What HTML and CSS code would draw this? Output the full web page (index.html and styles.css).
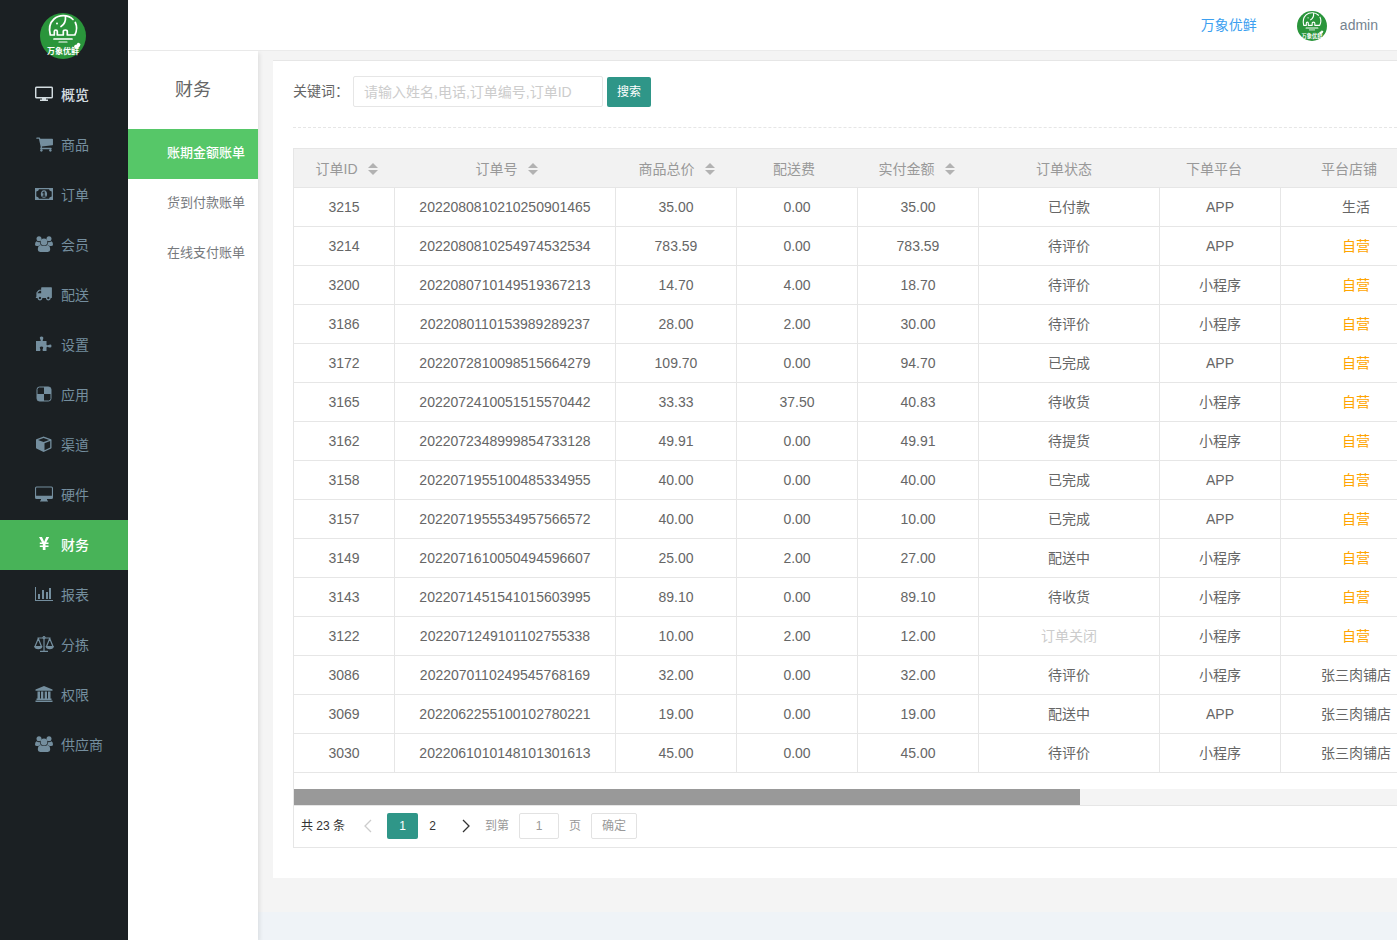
FILE: index.html
```html
<!DOCTYPE html>
<html lang="zh-CN">
  <head>
    <meta charset="UTF-8" />
    <meta name="viewport" content="width=device-width, initial-scale=1.0" />
    <title>账期金额账单</title>
    <link rel="stylesheet" href="styles.css">
  </head>
  <body>
    <!-- 公用图形 -->
    <svg class="defs" aria-hidden="true">
      <symbol id="logo" viewBox="0 0 46 46">
        <circle cx="23" cy="23" r="23" fill="#2a953b" />
        <g fill="none" stroke="#fff" stroke-width="1.700" stroke-linecap="round" stroke-linejoin="round">
          <path d="M33 6.500C28 1.500 19 1.500 14 6 9 10.500 9 17 10.300 22h4v-3.500q0-1.500 1.500-1.500t1.500 1.500V22h6v-3.500q0-1.500 2-1.500t2 1.500V22h7.500c2-4 2.500-8.500.5-12.500" />
          <path d="M25.500 3.500q.5 7-4.500 10" />
          <path d="M14 26h18" />
          <path d="M19 29h8" stroke-width="1.200" />
        </g>
        <circle cx="17" cy="10.500" r="1" fill="#fff" />
        <path d="M34 34q0-3 3-2.500 0-3 3.500-.5-.5 4-4.500 4.500z" fill="#fff" />
      </symbol>
      <symbol id="users" viewBox="0 0 18 16">
        <circle cx="4" cy="2.700" r="2.500" />
        <circle cx="14" cy="2.700" r="2.500" />
        <path d="M1.500 5.200Q4 7 5 6q0 1.500.8 2.800Q4 9 3.500 10H2Q0 10 0 8.400 0 6 1.500 5.200zM16.500 5.200Q14 7 13 6q0 1.500-.8 2.800Q14 9 14.500 10H16q2 0 2-1.600 0-2.400-1.500-3.200z" />
        <circle cx="9" cy="6" r="3.400" />
        <path d="M5.400 9Q9 11 12.600 9q2.600.8 2.600 4.600 0 2.400-2.400 2.400H5.200q-2.400 0-2.400-2.400Q2.800 9.800 5.400 9z" />
      </symbol>
    </svg>

    <div class="layout">
      <!-- 主导航 -->
      <nav class="side">
        <svg class="side-logo" viewBox="0 0 46 46">
          <use href="#logo" />
          <text x="7" y="41">万象优鲜</text>
        </svg>
        <a class="side-item light" href="#">
          <svg viewBox="0 0 18 16"><path fill="none" stroke="currentColor" stroke-width="1.500" d="M1.700 1.300h14.600q1 0 1 1v8.400q0 1-1 1H1.700q-1 0-1-1V2.300q0-1 1-1z" /><path d="M7 12h4v1.500h2V15H5v-1.500h2z" /></svg>
          <span>概览</span>
        </a>
        <a class="side-item" href="#">
          <svg viewBox="-60 100 1792 1593"><path d="M704 1536q0 52-38 90t-90 38-90-38-38-90 38-90 90-38 90 38 38 90zm896 0q0 52-38 90t-90 38-90-38-38-90 38-90 90-38 90 38 38 90zm128-1088v512q0 24-16.500 42.500t-40.500 21.500l-1044 122q13 60 13 70 0 16-24 64h920q26 0 45 19t19 45-19 45-45 19h-1024q-26 0-45-19t-19-45q0-11 8-31.500t16-36 21.500-40 15.500-29.500l-177-823h-204q-26 0-45-19t-19-45 19-45 45-19h256q16 0 28.500 6.500t19.500 15.500 13 24.500 8 26 5.500 29.500 4.500 26h1201q26 0 45 19t19 45z" /></svg>
          <span>商品</span>
        </a>
        <a class="side-item" href="#">
          <svg viewBox="0 0 18 16"><path fill-rule="evenodd" d="M0 2h18v12H0zM4 3.300Q3.800 5.200 1.300 5.600v4.800Q3.800 10.800 4 12.700h10q.2-1.900 2.700-2.300V5.600Q14.200 5.200 14 3.300z" /><path fill-rule="evenodd" d="M9 4.200c4.200 0 4.200 7.600 0 7.600s-4.200-7.600 0-7.600zM8.600 5.500L7.200 6.700l.5.700.7-.4v2.700h-1v1h3.200v-1h-.9V5.500z" /></svg>
          <span>订单</span>
        </a>
        <a class="side-item" href="#">
          <svg><use href="#users" /></svg>
          <span>会员</span>
        </a>
        <a class="side-item" href="#">
          <svg viewBox="-20 120 1930 1716"><path d="M640 1408q0-52-38-90t-90-38-90 38-38 90 38 90 90 38 90-38 38-90zm-384-512h384v-256h-158q-13 0-22 9l-195 195q-9 9-9 22v30zm1280 512q0-52-38-90t-90-38-90 38-38 90 38 90 90 38 90-38 38-90zm256-1088v1024q0 15-4 26.500t-13.500 18.500-16.500 11.500-23.500 6-22.500 2-25.500 0-22.500-.5q0 106-75 181t-181 75-181-75-75-181h-384q0 106-75 181t-181 75-181-75-75-181h-64q-3 0-22.500.5t-25.500 0-22.500-2-23.500-6-16.500-11.500-13.500-18.500-4-26.500q0-26 19-45t45-19v-320q0-8-.5-35t0-38 2.500-34.500 6.500-37 14-30.500 22.500-30l198-198q19-19 50.500-32t58.500-13h160v-192q0-26 19-45t45-19h1024q26 0 45 19t19 45z" /></svg>
          <span>配送</span>
        </a>
        <a class="side-item" href="#">
          <svg viewBox="0 0 18 16"><path d="M1 5h4.600Q6 4 5.200 3.200 4 .5 6.500.5t1.600 2.700Q7.200 4.200 8 5h3.500v3.800q.8.900 2 .2 3-1.300 3 1t-3 1.200q-1.200-.8-2 .2V15H8q-1-.8-.2-2 1.200-2.400-1.300-2.400T5.200 13q.8 1.200-.2 2H1z" /></svg>
          <span>设置</span>
        </a>
        <a class="side-item" href="#">
          <svg viewBox="0 0 18 16"><rect x="2" y="1" width="14" height="14" rx="2.500" fill="none" stroke="currentColor" /><path d="M9 1h4.500Q16 1 16 3.500V8H9zM2 8h7v7H4.500Q2 15 2 12.500z" /></svg>
          <span>应用</span>
        </a>
        <a class="side-item" href="#">
          <svg viewBox="0 0 18 16"><path fill-rule="evenodd" d="M8.600.6L1.300 3.200 1 3.700v8.200l.4.600 7.200 3.400 7.500-3.400.4-.6V3.700l-.4-.5zM8.600 2l5.600 2-5.600 2.100L3 4zM9.500 7.300l5.700-2.200v6.500l-5.700 2.600z" /></svg>
          <span>渠道</span>
        </a>
        <a class="side-item" href="#">
          <svg viewBox="0 0 18 16"><path fill-rule="evenodd" d="M1.500.5h15Q18 .5 18 2v9.500q0 1.500-1.500 1.500H12v1.500h1v1H5v-1h1V13H1.500Q0 13 0 11.500V2Q0 .5 1.500.5zM1.500 1.600q-.4 0-.4.4v7.800h15.800V2q0-.4-.4-.4z" /></svg>
          <span>硬件</span>
        </a>
        <a class="side-item active" href="#">
          <svg viewBox="0 0 18 16"><path d="M4 1h3l2.200 4.700L11.200 1h3l-3 5.600h2.300v1.500h-3v1.300h3v1.500h-3V14H7.800v-3.100h-3V9.400h3V8.100h-3V6.600H7z" /></svg>
          <span>财务</span>
        </a>
        <a class="side-item" href="#">
          <svg class="wide" viewBox="0 0 20 16"><path d="M1 1h1v13h17v1H1zM4 8h2v5H4zM8 4h2v9H8zM12 6h2v7h-2zM15 2h2v11h-2z" /></svg>
          <span>报表</span>
        </a>
        <a class="side-item" href="#">
          <svg class="wide" viewBox="0 0 20 16"><g fill="none" stroke="currentColor"><path d="M3.500 2h13M10 1v14M6 15.300h8M4.300 2.500L1 10.500M4.300 2.500l3.200 8M15.700 2.500l-3.200 8M15.700 2.500l3.300 8" stroke-width="1.200" /><circle cx="10" cy="1.600" r="1.200" /></g><path d="M0 10h8.500q-.5 3.200-4.200 3.200T0 10zM11.500 10H20q-.5 3.200-4.200 3.200t-4.300-3.200z" /></svg>
          <span>分拣</span>
        </a>
        <a class="side-item" href="#">
          <svg viewBox="0 0 18 16"><path d="M9 0l8.500 3.500v1.200H.5V3.500zM2.500 5.500H5v7h1v-7h2.300v7h1.400v-7H12v7h1v-7h2.500v7h1V14h-15v-1.500h1zM.5 14.600h17V16H.5z" /></svg>
          <span>权限</span>
        </a>
        <a class="side-item" href="#">
          <svg><use href="#users" /></svg>
          <span>供应商</span>
        </a>
      </nav>

      <div class="wrap">
        <header class="top">
          <a class="shop" href="#">万象优鲜</a>
          <svg class="avatar" viewBox="0 0 46 46">
            <use href="#logo" />
            <text x="7" y="41">万象优鲜</text>
          </svg>
          <a class="user" href="#">admin</a>
        </header>

        <div class="body">
          <!-- 二级菜单 -->
          <nav class="sub">
            <h2>财务</h2>
            <a class="active" href="#">账期金额账单</a>
            <a href="#">货到付款账单</a>
            <a href="#">在线支付账单</a>
          </nav>

          <main class="content">
            <div class="card">
              <form class="search">
                <label for="keyword">关键词：</label>
                <input id="keyword" type="text" placeholder="请输入姓名,电话,订单编号,订单ID">
                <button type="button">搜索</button>
              </form>

              <div class="table-box">
                <table class="head">
                  <colgroup><col class="w100"><col class="w220"><col class="w120"><col class="w120"><col class="w120"><col class="w180"><col class="w120"><col class="w150"></colgroup>
                  <thead>
                    <tr>
                      <th>订单ID<i class="sort"></i></th>
                      <th>订单号<i class="sort"></i></th>
                      <th>商品总价<i class="sort"></i></th>
                      <th>配送费</th>
                      <th>实付金额<i class="sort"></i></th>
                      <th>订单状态</th>
                      <th>下单平台</th>
                      <th>平台店铺</th>
                    </tr>
                  </thead>
                </table>
                <table class="rows">
                  <colgroup><col class="w101"><col class="w221"><col class="w121"><col class="w121"><col class="w121"><col class="w181"><col class="w121"><col class="w151"></colgroup>
                  <tbody>
                    <tr><td>3215</td><td>2022080810210250901465</td><td>35.00</td><td>0.00</td><td>35.00</td><td>已付款</td><td>APP</td><td>生活</td></tr>
                    <tr><td>3214</td><td>2022080810254974532534</td><td>783.59</td><td>0.00</td><td>783.59</td><td>待评价</td><td>APP</td><td class="own">自营</td></tr>
                    <tr><td>3200</td><td>2022080710149519367213</td><td>14.70</td><td>4.00</td><td>18.70</td><td>待评价</td><td>小程序</td><td class="own">自营</td></tr>
                    <tr><td>3186</td><td>2022080110153989289237</td><td>28.00</td><td>2.00</td><td>30.00</td><td>待评价</td><td>小程序</td><td class="own">自营</td></tr>
                    <tr><td>3172</td><td>2022072810098515664279</td><td>109.70</td><td>0.00</td><td>94.70</td><td>已完成</td><td>APP</td><td class="own">自营</td></tr>
                    <tr><td>3165</td><td>2022072410051515570442</td><td>33.33</td><td>37.50</td><td>40.83</td><td>待收货</td><td>小程序</td><td class="own">自营</td></tr>
                    <tr><td>3162</td><td>2022072348999854733128</td><td>49.91</td><td>0.00</td><td>49.91</td><td>待提货</td><td>小程序</td><td class="own">自营</td></tr>
                    <tr><td>3158</td><td>2022071955100485334955</td><td>40.00</td><td>0.00</td><td>40.00</td><td>已完成</td><td>APP</td><td class="own">自营</td></tr>
                    <tr><td>3157</td><td>2022071955534957566572</td><td>40.00</td><td>0.00</td><td>10.00</td><td>已完成</td><td>APP</td><td class="own">自营</td></tr>
                    <tr><td>3149</td><td>2022071610050494596607</td><td>25.00</td><td>2.00</td><td>27.00</td><td>配送中</td><td>小程序</td><td class="own">自营</td></tr>
                    <tr><td>3143</td><td>2022071451541015603995</td><td>89.10</td><td>0.00</td><td>89.10</td><td>待收货</td><td>小程序</td><td class="own">自营</td></tr>
                    <tr><td>3122</td><td>2022071249101102755338</td><td>10.00</td><td>2.00</td><td>12.00</td><td class="closed">订单关闭</td><td>小程序</td><td class="own">自营</td></tr>
                    <tr><td>3086</td><td>2022070110249545768169</td><td>32.00</td><td>0.00</td><td>32.00</td><td>待评价</td><td>小程序</td><td>张三肉铺店</td></tr>
                    <tr><td>3069</td><td>2022062255100102780221</td><td>19.00</td><td>0.00</td><td>19.00</td><td>配送中</td><td>APP</td><td>张三肉铺店</td></tr>
                    <tr><td>3030</td><td>2022061010148101301613</td><td>45.00</td><td>0.00</td><td>45.00</td><td>待评价</td><td>小程序</td><td>张三肉铺店</td></tr>
                  </tbody>
                </table>

                <!-- 横向滚动条 -->
                <div class="scroll"><div class="thumb"></div></div>

                <!-- 分页 -->
                <div class="pager">
                  <span class="total">共 23 条</span>
                  <button class="arrow" type="button" aria-label="上一页" disabled><svg viewBox="0 0 8 12"><path d="M7 0L1 6l6 6" /></svg></button>
                  <button class="num current" type="button">1</button>
                  <button class="num" type="button">2</button>
                  <button class="arrow" type="button" aria-label="下一页"><svg viewBox="0 0 8 12"><path d="M1 0l6 6-6 6" /></svg></button>
                  <label for="page">到第</label>
                  <input id="page" type="text" value="1">
                  <span class="unit">页</span>
                  <button class="go" type="button">确定</button>
                </div>
              </div>
            </div>
          </main>
        </div>
      </div>
    </div>
  </body>
</html>
```
FILE: styles.css
```css
* {
  margin: 0;
  padding: 0;
  box-sizing: border-box;
}

body {
  font-family: "Liberation Sans", "Noto Sans CJK SC", sans-serif;
  font-size: 14px;
  line-height: 24px;
  color: #666;
  background: #eff3f7;
  overflow: hidden;
}

a {
  text-decoration: none;
}

button,
input {
  font: inherit;
  outline: none;
}

.defs {
  position: absolute;
  width: 0;
  height: 0;
}

.layout {
  display: flex;
  min-height: 100vh;
}

/* 主导航 */
.side {
  flex: 0 0 128px;
  background: #1b2023;
}

.side-logo {
  display: block;
  width: 46px;
  height: 46px;
  margin: 13px 0 11px 40px;
}

.side-logo text,
.avatar text {
  font-size: 8px;
  font-weight: 700;
  fill: #fff;
}

.side-item {
  display: flex;
  align-items: center;
  gap: 8px;
  height: 50px;
  padding-left: 35px;
  color: #748e9e;
}

.side-item svg {
  width: 18px;
  height: 16px;
  margin-bottom: 2px;
  fill: currentColor;
}

.side-item .wide {
  width: 20px;
  margin-left: -1px;
  margin-right: -1px;
}

.side-item.light {
  color: #d3dce0;
}

.side-item.active {
  color: #fff;
  background: #48b358;
}

.side-item.light span,
.side-item.active span {
  font-weight: 500;
}

/* 右侧区域 */
.wrap {
  flex: 1;
  min-width: 0;
  display: flex;
  flex-direction: column;
}

.top {
  display: flex;
  align-items: center;
  justify-content: flex-end;
  height: 51px;
  padding-right: 19px;
  background: #fff;
  border-bottom: 1px solid #ebebeb;
}

.shop {
  margin-right: 40px;
  color: #3c9ff0;
}

.avatar {
  width: 30px;
  height: 30px;
  margin-top: 2px;
  margin-right: 13px;
}

.user {
  color: #76838f;
}

.body {
  flex: 1;
  display: flex;
}

/* 二级菜单 */
.sub {
  flex: 0 0 130px;
  z-index: 1;
  background: #fff;
  box-shadow: 2px 2px 4px rgba(0, 0, 0, 0.08);
}

.sub h2 {
  height: 78px;
  line-height: 78px;
  font-size: 18px;
  font-weight: 400;
  text-align: center;
}

.sub a {
  display: block;
  height: 50px;
  padding-right: 13px;
  line-height: 48px;
  font-size: 13px;
  text-align: right;
  color: #76797d;
}

.sub .active {
  color: #fff;
  font-weight: 500;
  background: #56c768;
}

/* 内容 */
.content {
  flex: 1;
  min-width: 0;
  align-self: flex-start;
  padding: 9px 0 34px 15px;
  background: #f4f4f4;
}

.card {
  padding: 15px 0 30px 20px;
  background: #fff;
  border-top: 1px solid #e6e6e6;
}

.search {
  display: flex;
  align-items: center;
  padding-bottom: 20px;
  margin-bottom: 20px;
  border-bottom: 1px dashed #e6e6e6;
}

.search label {
  width: 60px;
  padding-bottom: 2px;
}

.search input {
  width: 250px;
  height: 31px;
  margin-right: 4px;
  padding: 0 10px;
  border: 1px solid #e6e6e6;
  border-radius: 2px;
}

.search input::placeholder {
  color: #ccc;
}

.search button {
  width: 44px;
  height: 30px;
  font-size: 12px;
  color: #fff;
  background: #2f9688;
  border: none;
  border-radius: 2px;
}

/* 表格 */
.table-box {
  overflow: hidden;
  border: 1px solid #e6e6e6;
  border-right: none;
}

table {
  width: 0;
  table-layout: fixed;
  border-collapse: separate;
  border-spacing: 0;
}

.head {
  min-width: 100%;
  background: #f2f2f2;
}

th,
td {
  height: 39px;
  border-bottom: 1px solid #e6e6e6;
  text-align: center;
  white-space: nowrap;
}

th {
  padding-top: 2px;
  color: #999;
  font-weight: 400;
}

td {
  border-right: 1px solid #e6e6e6;
}

.w100 { width: 100px; }
.w101 { width: 101px; }
.w120 { width: 120px; }
.w121 { width: 121px; }
.w150 { width: 150px; }
.w151 { width: 151px; }
.w180 { width: 180px; }
.w181 { width: 181px; }
.w220 { width: 220px; }
.w221 { width: 221px; }

.own {
  color: orange;
}

.closed {
  color: #ccc;
}

/* 排序箭头 */
.sort {
  position: relative;
  display: inline-block;
  width: 10px;
  height: 12px;
  margin-left: 5px;
  vertical-align: -1px;
}

.sort::before,
.sort::after {
  content: "";
  position: absolute;
  left: 5px;
  border: 5px solid transparent;
}

.sort::before {
  top: -5px;
  border-bottom-color: #b2b2b2;
}

.sort::after {
  bottom: -5px;
  border-top-color: #b2b2b2;
}

.scroll {
  height: 16px;
  margin-top: 16px;
  background: #f4f4f4;
}

.thumb {
  width: 71.25%;
  height: 100%;
  background: #999;
}

/* 分页 */
.pager {
  display: flex;
  align-items: center;
  height: 42px;
  padding: 0 0 2px 7px;
  border-top: 1px solid #e6e6e6;
  font-size: 12px;
  color: #999;
}

.pager button {
  height: 26px;
  background: none;
  border: none;
  border-radius: 2px;
  color: #333;
}

.total {
  width: 48px;
  color: #333;
}

.arrow {
  width: 38px;
}

.arrow svg {
  width: 8px;
  height: 12px;
  margin-top: 7px;
  fill: none;
  stroke: #333;
  stroke-width: 1.3;
  overflow: visible;
}

.arrow:disabled svg {
  stroke: #ccc;
}

.num {
  width: 29px;
}

.pager .current {
  width: 31px;
  color: #fff;
  background: #2f9688;
}

.pager label {
  width: 34px;
}

.pager input {
  width: 40px;
  height: 26px;
  margin-right: 10px;
  border: 1px solid #e2e2e2;
  border-radius: 2px;
  text-align: center;
  color: #999;
}

.unit {
  width: 22px;
}

.pager .go {
  width: 46px;
  border: 1px solid #e2e2e2;
  color: #999;
}
```
